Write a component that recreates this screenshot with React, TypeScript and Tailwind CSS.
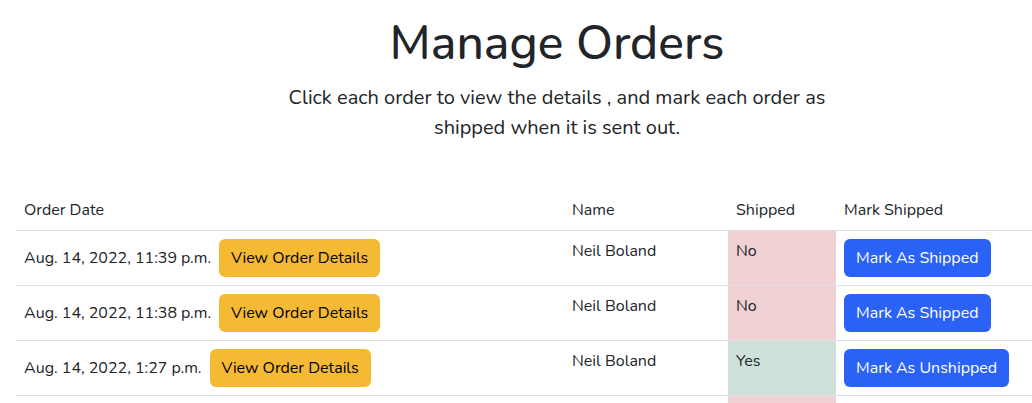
import React from 'react';

type Order = {
  date: string;
  name: string;
  shipped: boolean;
};

const orders: Order[] = [
  { date: 'Aug. 14, 2022, 11:39 p.m.', name: 'Neil Boland', shipped: false },
  { date: 'Aug. 14, 2022, 11:38 p.m.', name: 'Neil Boland', shipped: false },
  { date: 'Aug. 14, 2022, 1:27 p.m.', name: 'Neil Boland', shipped: true },
  { date: 'Aug. 13, 2022, 9:12 p.m.', name: 'Neil Boland', shipped: false },
];

const App: React.FC = () => {
  return (
    <div className="w-full overflow-hidden bg-white text-[#212529] font-['Nunito','Lato',sans-serif]">
      <div className="w-[1114px] px-4">
        <h1 className="mt-[15px] text-center text-[48px] leading-[1.2] font-medium">Manage Orders</h1>
        <p className="mx-auto mt-[10px] w-[560px] text-center text-[20px] leading-[30px]">
          Click each order to view the details , and mark each order as shipped when it is sent out.
        </p>

        <table className="mt-[47px] w-full border-collapse text-[16px] leading-6">
          <colgroup>
            <col className="w-[548px]" />
            <col className="w-[164px]" />
            <col className="w-[108px]" />
            <col />
          </colgroup>
          <thead>
            <tr className="border-b border-[#dee2e6]">
              <th className="p-2 text-left align-bottom font-normal">Order Date</th>
              <th className="p-2 text-left align-bottom font-normal">Name</th>
              <th className="p-2 text-left align-bottom font-normal">Shipped</th>
              <th className="p-2 text-left align-bottom font-normal">Mark Shipped</th>
            </tr>
          </thead>
          <tbody>
            {orders.map((order, idx) => (
              <tr key={idx} className="border-b border-[#dee2e6]">
                <td className="p-2 align-top">
                  <div className="flex items-center gap-2">
                    <span>{order.date}</span>
                    <button className="h-[38px] rounded-md bg-[#f5ba34] px-3 text-black">View Order Details</button>
                  </div>
                </td>
                <td className="p-2 align-top">{order.name}</td>
                <td className={`p-2 align-top ${order.shipped ? 'bg-[#cfe2da]' : 'bg-[#f0d1d4]'}`}>
                  {order.shipped ? 'Yes' : 'No'}
                </td>
                <td className="p-2 align-top">
                  <button className="h-[38px] rounded-md bg-[#2962f5] px-3 text-white">
                    {order.shipped ? 'Mark As Unshipped' : 'Mark As Shipped'}
                  </button>
                </td>
              </tr>
            ))}
          </tbody>
        </table>
      </div>
    </div>
  );
};

export default App;
